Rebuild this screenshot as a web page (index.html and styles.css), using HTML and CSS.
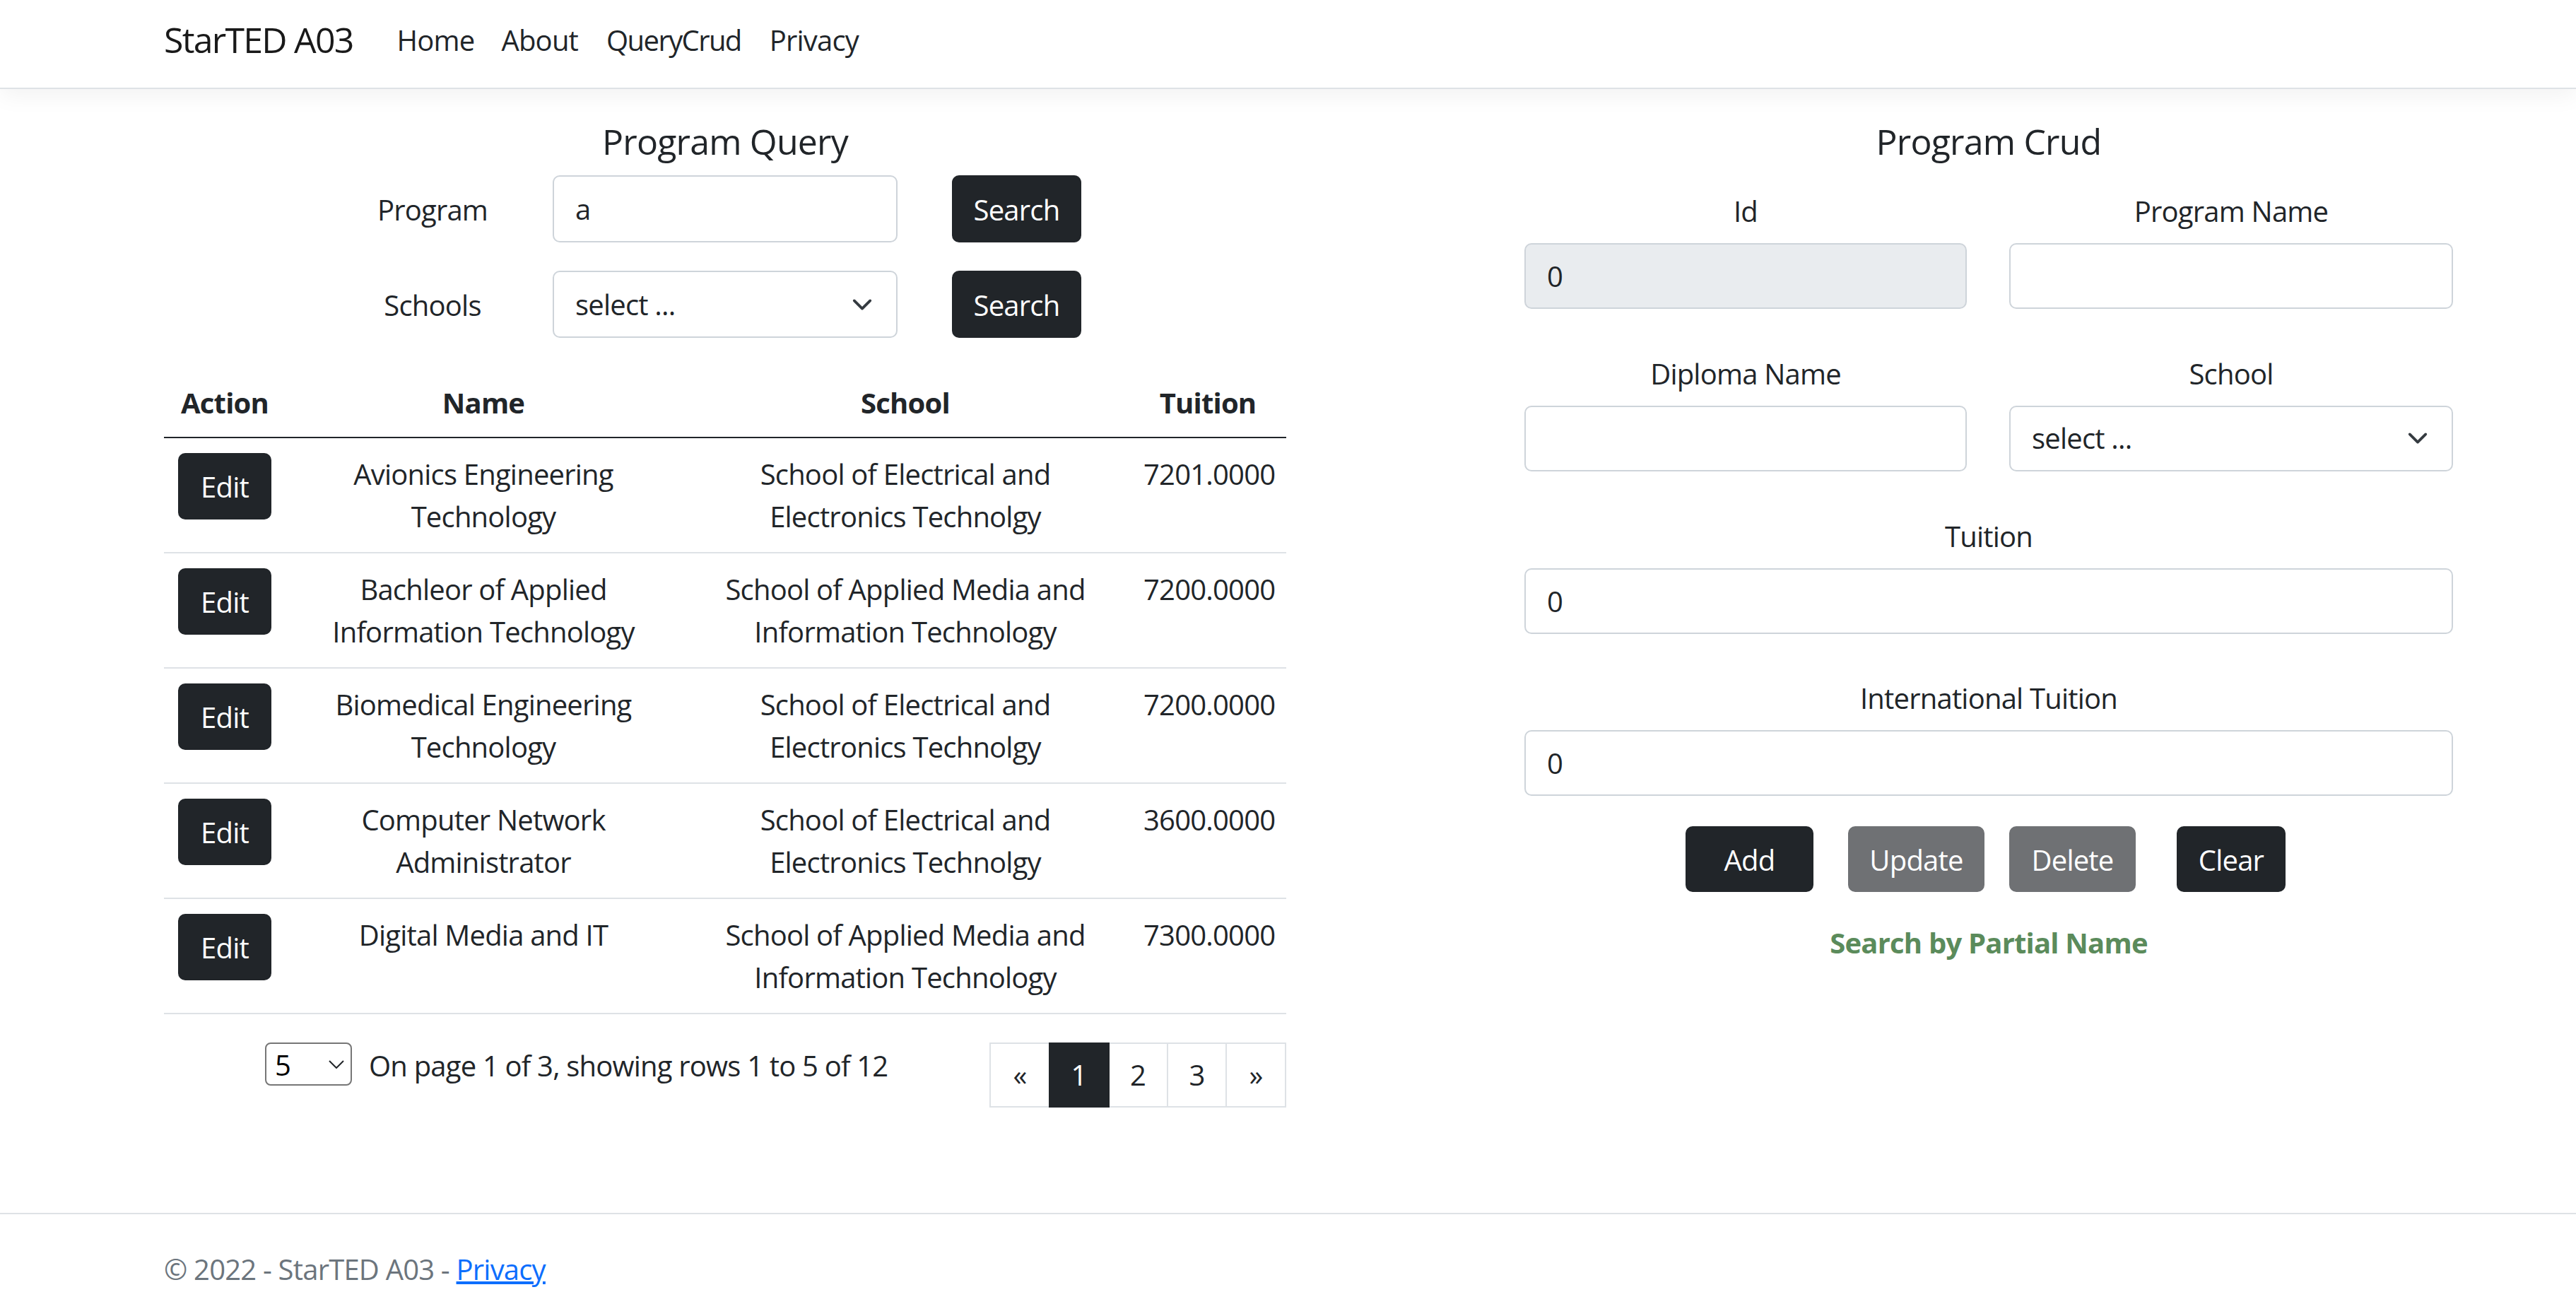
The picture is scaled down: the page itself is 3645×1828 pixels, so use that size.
FILE: index.html
```html
<!DOCTYPE html>
<html lang="en">
<head>
<meta charset="utf-8">
<title>QueryCrud - StarTED A03</title>
<link rel="stylesheet" href="styles.css">
</head>
<body>
<header class="navbar">
  <a class="brand" href="#">StarTED A03</a>
  <nav class="nav-links">
    <a class="nav-link" href="#">Home</a>
    <a class="nav-link" href="#">About</a>
    <a class="nav-link" href="#">QueryCrud</a>
    <a class="nav-link" href="#">Privacy</a>
  </nav>
</header>

<main class="main">
  <section class="query">
    <h5 class="title">Program Query</h5>
    <div class="search-row">
      <label class="search-label">Program</label>
      <div class="search-field">
        <input class="field" type="text" value="a">
      </div>
      <button class="btn btn-dark btn-search">Search</button>
    </div>
    <div class="search-row">
      <label class="search-label">Schools</label>
      <div class="select-wrap search-field">
        <select class="field select"><option>select ...</option></select>
        <svg class="chev" viewBox="0 0 16 16"><path d="m2 5 6 6 6-6"/></svg>
      </div>
      <button class="btn btn-dark btn-search">Search</button>
    </div>

    <table class="grid">
      <colgroup>
        <col class="c-action"><col class="c-name"><col class="c-school"><col class="c-tuition">
      </colgroup>
      <thead>
        <tr><th>Action</th><th>Name</th><th>School</th><th>Tuition</th></tr>
      </thead>
      <tbody>
        <tr>
          <td><button class="btn btn-dark btn-edit">Edit</button></td>
          <td>Avionics Engineering Technology</td>
          <td>School of Electrical and Electronics Technolgy</td>
          <td>7201.0000</td>
        </tr>
        <tr>
          <td><button class="btn btn-dark btn-edit">Edit</button></td>
          <td>Bachleor of Applied Information Technology</td>
          <td>School of Applied Media and Information Technology</td>
          <td>7200.0000</td>
        </tr>
        <tr>
          <td><button class="btn btn-dark btn-edit">Edit</button></td>
          <td>Biomedical Engineering Technology</td>
          <td>School of Electrical and Electronics Technolgy</td>
          <td>7200.0000</td>
        </tr>
        <tr>
          <td><button class="btn btn-dark btn-edit">Edit</button></td>
          <td>Computer Network Administrator</td>
          <td>School of Electrical and Electronics Technolgy</td>
          <td>3600.0000</td>
        </tr>
        <tr>
          <td><button class="btn btn-dark btn-edit">Edit</button></td>
          <td>Digital Media and IT</td>
          <td>School of Applied Media and Information Technology</td>
          <td>7300.0000</td>
        </tr>
      </tbody>
    </table>

    <div class="pager-row">
      <div class="pager-info">
        <div class="size-wrap">
          <select class="size-select"><option>5</option></select>
          <svg class="size-chev" viewBox="0 0 22 12"><polyline points="1,1 11,11 21,1"/></svg>
        </div>
        <span class="pager-text">On page 1 of 3, showing rows 1 to 5 of 12</span>
      </div>
      <ul class="pagination">
        <li><a class="page-link" href="#">«</a></li>
        <li><a class="page-link active" href="#">1</a></li>
        <li><a class="page-link" href="#">2</a></li>
        <li><a class="page-link" href="#">3</a></li>
        <li><a class="page-link" href="#">»</a></li>
      </ul>
    </div>
  </section>

  <section class="crud">
    <h5 class="title crud-title">Program Crud</h5>
    <div class="crud-grid">
      <div class="group">
        <label class="crud-label">Id</label>
        <input class="field crud-field disabled" type="text" value="0" disabled>
      </div>
      <div class="group">
        <label class="crud-label">Program Name</label>
        <input class="field crud-field" type="text" value="">
      </div>
      <div class="group">
        <label class="crud-label">Diploma Name</label>
        <input class="field crud-field" type="text" value="">
      </div>
      <div class="group">
        <label class="crud-label">School</label>
        <div class="select-wrap crud-select">
          <select class="field select"><option>select ...</option></select>
          <svg class="chev" viewBox="0 0 16 16"><path d="m2 5 6 6 6-6"/></svg>
        </div>
      </div>
      <div class="group wide">
        <label class="crud-label">Tuition</label>
        <input class="field crud-field" type="text" value="0">
      </div>
      <div class="group wide">
        <label class="crud-label">International Tuition</label>
        <input class="field crud-field" type="text" value="0">
      </div>
    </div>
    <div class="crud-actions">
      <button class="btn btn-dark act act-add">Add</button>
      <button class="btn btn-dark act act-update" disabled>Update</button>
      <button class="btn btn-dark act act-delete" disabled>Delete</button>
      <button class="btn btn-dark act act-clear">Clear</button>
    </div>
    <p class="partial">Search by Partial Name</p>
  </section>
</main>

<footer class="footer">
  © 2022 - StarTED A03 - <a class="footer-link" href="#">Privacy</a>
</footer>
</body>
</html>
```

FILE: styles.css
```css
* {
  box-sizing: border-box;
}

html,
body {
  margin: 0;
  padding: 0;
}

body {
  font-family: "Open Sans", "Noto Sans", sans-serif;
  font-size: 40px;
  line-height: 60px;
  letter-spacing: -0.02em;
  color: #212529;
  background: #ffffff;
  min-height: 1828px;
  display: flex;
  flex-direction: column;
  overflow: hidden;
}

a {
  text-decoration: none;
  color: inherit;
}

button,
input,
select {
  font-family: inherit;
  font-size: inherit;
  letter-spacing: inherit;
  line-height: inherit;
}

/* ---------- navbar ---------- */
.navbar {
  display: flex;
  align-items: center;
  height: 126px;
  padding: 0 0 11px 232px;
  background: #ffffff;
  border-bottom: 2.5px solid #dee2e6;
  box-shadow: 0 10px 30px rgba(0, 0, 0, 0.05);
  position: relative;
  z-index: 1;
}

.brand {
  font-size: 50px;
  line-height: 75px;
  letter-spacing: -0.035em;
  color: rgba(0, 0, 0, 0.9);
  margin-right: 42px;
}

.nav-links {
  display: flex;
}

.nav-link {
  padding: 0 20px;
  color: #212529;
}

.nav-link:nth-child(2) {
  margin-left: -2px;
}

.nav-link:nth-child(3) {
  letter-spacing: -0.04em;
}

/* ---------- main ---------- */
.main {
  display: flex;
  align-items: flex-start;
  padding: 44px 0 0 232px;
}

.query {
  width: 1588px;
  flex: none;
}

.crud {
  width: 1314px;
  flex: none;
  margin-left: 337px;
}

.title {
  margin: 0 0 18px;
  font-size: 50px;
  line-height: 60px;
  font-weight: 500;
  text-align: center;
}

.crud-title {
  margin-bottom: 34px;
}

/* ---------- query form ---------- */
.search-row {
  display: flex;
  align-items: center;
  height: 95px;
  margin-bottom: 40px;
}

.search-label {
  width: 240px;
  margin-left: 260px;
  margin-right: 50px;
  text-align: center;
  padding-top: 2px;
}

.search-field {
  width: 488px;
  height: 95px;
  flex: none;
}

.field {
  display: block;
  width: 100%;
  height: 100%;
  margin: 0;
  padding: 0 30px;
  color: #212529;
  background: #ffffff;
  border: 2.5px solid #ced4da;
  border-radius: 10px;
  outline: none;
}

.field.disabled {
  background: #e9ecef;
}

.select {
  appearance: none;
  -webkit-appearance: none;
}

.select-wrap {
  position: relative;
}

.chev {
  position: absolute;
  right: 30px;
  top: 50%;
  width: 40px;
  height: 30px;
  transform: translateY(-50%);
  fill: none;
  stroke: #343a40;
  stroke-width: 2;
  stroke-linecap: round;
  stroke-linejoin: round;
  pointer-events: none;
}

.btn {
  display: inline-block;
  margin: 0;
  padding: 2px 0 0;
  border: 2.5px solid #212529;
  border-radius: 10px;
  background: #212529;
  color: #ffffff;
  text-align: center;
  cursor: pointer;
}

.btn-search {
  width: 183px;
  height: 95px;
  margin-left: 77px;
  flex: none;
}

.btn-edit {
  width: 132px;
  height: 94px;
}

/* ---------- table ---------- */
.grid {
  width: 1588px;
  border-collapse: collapse;
  table-layout: fixed;
}

.c-action { width: 172px; }
.c-name { width: 560px; }
.c-school { width: 634px; }
.c-tuition { width: 222px; }

.grid th,
.grid td {
  padding: 21px 20px 20px;
  text-align: center;
  vertical-align: top;
  border-bottom: 2.5px solid #dee2e6;
}

.grid th {
  padding-top: 21.5px;
  padding-bottom: 18.5px;
  font-weight: 700;
  border-bottom: 2.5px solid #212529;
}

.grid td:first-child {
  padding-top: 21px;
}

/* ---------- pager ---------- */
.pager-row {
  display: flex;
  align-items: flex-start;
  margin-top: 40px;
}

.pager-info {
  display: flex;
  align-items: center;
  height: 61px;
  margin-left: 143px;
}

.size-wrap {
  position: relative;
  width: 123px;
  height: 61px;
  margin-right: 24px;
}

.size-select {
  appearance: none;
  -webkit-appearance: none;
  width: 100%;
  height: 100%;
  margin: 0;
  padding: 0 0 0 12px;
  border: 2.5px solid #767676;
  border-radius: 8px;
  background: #ffffff;
  color: #000000;
}

.size-chev {
  position: absolute;
  left: 90px;
  top: 25px;
  width: 22px;
  height: 12px;
  fill: none;
  stroke: #212529;
  stroke-width: 2;
  pointer-events: none;
}

.pager-text {
  padding-top: 4px;
}

.pagination {
  display: flex;
  list-style: none;
  margin: 0 0 0 auto;
  padding: 0;
}

.pagination li + li {
  margin-left: -2.5px;
}

.page-link {
  display: block;
  width: 86px;
  height: 92px;
  padding-top: 14px;
  line-height: 60px;
  text-align: center;
  color: #212529;
  background: #ffffff;
  border: 2.5px solid #dee2e6;
}

.page-link.active {
  position: relative;
  background: #212529;
  border-color: #212529;
  color: #ffffff;
}

/* ---------- crud form ---------- */
.crud-grid {
  display: grid;
  grid-template-columns: 626px 628px;
  column-gap: 60px;
  row-gap: 56.8px;
}

.group.wide {
  grid-column: 1 / span 2;
}

.crud-label {
  display: block;
  text-align: center;
  padding-top: 5px;
  margin-bottom: 15px;
}

.crud-field,
.crud-select {
  height: 93px;
}

.crud-actions {
  display: flex;
  margin-top: 43px;
  padding-left: 228px;
}

.act {
  height: 93px;
}

.act:disabled {
  background: #6f7174;
  border-color: #6f7174;
  cursor: default;
}

.act-add { width: 181px; }
.act-update { width: 193px; margin-left: 49px; }
.act-delete { width: 179px; margin-left: 35px; }
.act-clear { width: 154px; margin-left: 58px; }

.partial {
  margin: 39px 0 0;
  padding-top: 3px;
  text-align: center;
  font-weight: 700;
  color: #5b8b5b;
}

/* ---------- footer ---------- */
.footer {
  margin-top: auto;
  height: 112px;
  padding: 48px 0 0 232px;
  border-top: 2.5px solid #dee2e6;
  color: #6c757d;
  white-space: nowrap;
}

.footer-link {
  color: #0d6efd;
  text-decoration: underline;
}
```
